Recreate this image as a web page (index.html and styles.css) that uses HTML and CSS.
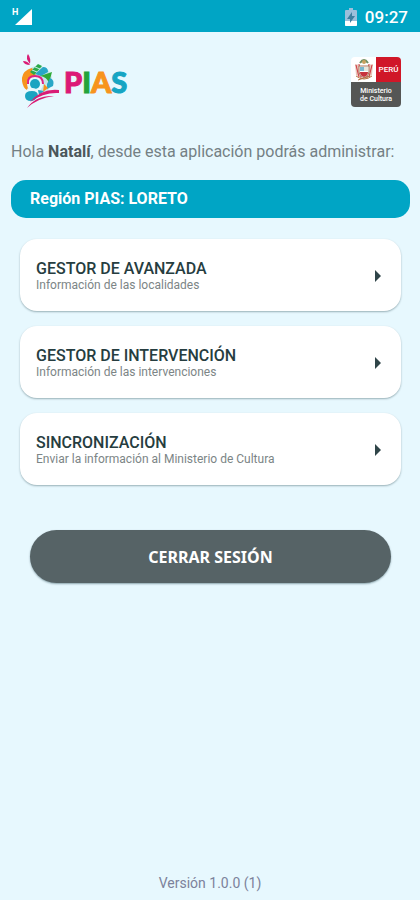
FILE: index.html
```html
<!DOCTYPE html>
<html lang="es">
<head>
    <meta charset="UTF-8">
    <meta name="viewport" content="width=device-width, initial-scale=1.0">
    <title>PIAS</title>
    <link rel="stylesheet" href="styles.css">
</head>
<body>
    <!-- Status bar -->
    <div class="status-bar">
        <div class="signal">
            <span class="signal-type">H</span>
            <svg width="18" height="18" viewBox="0 0 18 18" aria-hidden="true"><path d="M17 1v16H0z" fill="#fff"/></svg>
        </div>
        <div class="status-right">
            <svg width="12" height="18" viewBox="0 0 12 18" aria-hidden="true">
                <path d="M4 0h4v2h3q1 0 1 1v14q0 1-1 1H1q-1 0-1-1V3q0-1 1-1h3z" fill="#9dbfdb"/>
                <path d="M0 13h12v4q0 1-1 1H1q-1 0-1-1z" fill="#fff"/>
                <path d="M7 4L2 11h3v4l5-7H7z" fill="#3f7f9f"/>
            </svg>
            <span class="clock">09:27</span>
        </div>
    </div>

    <header class="header">
        <div class="brand">
            <svg width="38" height="56" viewBox="0 0 38 56" aria-hidden="true">
                <!-- feathers -->
                <path d="M8 10Q3 4 6 0q3 4 2 10z" fill="#d91c75"/>
                <path d="M8 11Q2 11 1 7q5 0 7 4z" fill="#d91c75"/>
                <!-- body -->
                <circle cx="16" cy="26" r="14" fill="#c5e6ea"/>
                <path d="M10 14Q-1 17 0 27q1 7 5 9l3-9 6-7z" fill="#f7941d"/>
                <path d="M8 18l8-8 4 2-8 9z" fill="#2baa4a"/>
                <path d="M10 16l5 2M13 13l5 2" stroke="#c9eee5" stroke-width="1"/>
                <path d="M13 20l8-7q5 0 5 5l-7 4z" fill="#28a7c7"/>
                <path d="M18 22l12-4-3 11q-2-6-9-7z" fill="#2faa36"/>
                <path d="M28 24q5 2 3 8l-6 3v-5z" fill="#28a7c7"/>
                <path d="M22 30l4 4-5 4z" fill="#f7941d"/>
                <circle cx="13" cy="30" r="8" fill="#e8f8fc"/>
                <path d="M6 30q-1-8 7-8t8 8" fill="none" stroke="#df2380" stroke-width="2"/>
                <circle cx="13" cy="30" r="5" fill="#1aa4c1"/>
                <circle cx="10" cy="42" r="8" fill="#e8f8fc"/>
                <path d="M3 42q0-5 7-5 6 0 6 5-3 5-7 5-6 0-6-5z" fill="#1aa4c1"/>
                <path d="M16 36l6 1-5 4z" fill="#28a7c7"/>
                <!-- strokes -->
                <path d="M8 48Q20 34 37 36v3Q22 38 8 48z" fill="#d91c75"/>
                <path d="M5 54Q14 41 32 42 16 44 5 54z" fill="#d91c75"/>
            </svg>
            <div class="brand-name"><span class="pink">P</span><span class="green">I</span><span class="orange">A</span><span class="blue">S</span></div>
        </div>
        <div class="ministry">
            <div class="ministry-top">
                <div class="shield">
                    <svg width="20" height="22" viewBox="0 0 20 22" aria-hidden="true">
                        <path d="M6 4q4-6 8 0" fill="none" stroke="#719064" stroke-width="2"/>
                        <circle cx="10" cy="3" r="2" fill="#c9a05d"/>
                        <path d="M1 5l5 1v12l-4-2zM19 5l-5 1v12l4-2z" fill="#e8c3b8"/>
                        <path d="M2 6l3 12M5 5l2 14M18 6l-3 12M15 5l-2 14" stroke="#cf3740" stroke-width="1"/>
                        <path d="M5 7h10v6q0 4-5 6-5-2-5-6z" fill="#fff" stroke="#a7755a"/>
                        <path d="M6 8h4v4H6z" fill="#79b7cf"/>
                        <path d="M10 8h4v4h-4z" fill="#e6e6dc"/>
                        <path d="M6 13h8q0 4-4 5-4-1-4-5z" fill="#c7333d"/>
                        <path d="M2 17q8 6 16 0M4 21l12-4" fill="none" stroke="#b37342"/>
                    </svg>
                </div>
                <div class="country">PERÚ</div>
            </div>
            <div class="ministry-name">Ministerio<br>de Cultura</div>
        </div>
    </header>

    <main class="content">
        <p class="greeting">Hola <b>Natalí</b>, desde esta aplicación podrás administrar:</p>
        <h1 class="region">Región PIAS: LORETO</h1>

        <div class="menu">
            <button class="card" type="button">
                <span class="card-text">
                    <span class="card-title">GESTOR DE AVANZADA</span>
                    <span class="card-info">Información de las localidades</span>
                </span>
                <svg width="6" height="12" viewBox="0 0 6 12" aria-hidden="true"><path d="M0 0l6 6-6 6z"/></svg>
            </button>
            <button class="card" type="button">
                <span class="card-text">
                    <span class="card-title">GESTOR DE INTERVENCIÓN</span>
                    <span class="card-info">Información de las intervenciones</span>
                </span>
                <svg width="6" height="12" viewBox="0 0 6 12" aria-hidden="true"><path d="M0 0l6 6-6 6z"/></svg>
            </button>
            <button class="card" type="button">
                <span class="card-text">
                    <span class="card-title">SINCRONIZACIÓN</span>
                    <span class="card-info">Enviar la información al Ministerio de Cultura</span>
                </span>
                <svg width="6" height="12" viewBox="0 0 6 12" aria-hidden="true"><path d="M0 0l6 6-6 6z"/></svg>
            </button>
        </div>

        <button class="logout" type="button">CERRAR SESIÓN</button>
    </main>

    <footer class="version">Versión 1.0.0 (1)</footer>
</body>
</html>
```

FILE: styles.css
```css
* {
    box-sizing: border-box;
}

body {
    margin: 0;
    min-height: 100vh;
    display: flex;
    flex-direction: column;
    font-family: Roboto, sans-serif;
    background-color: #e7f8fe;
}

/* Status bar */
.status-bar {
    display: flex;
    justify-content: space-between;
    align-items: center;
    height: 32px;
    padding: 2px 12px 0;
    background-color: #00a5c5;
    color: #fff;
}

.signal,
.status-right {
    display: flex;
    align-items: center;
}

.signal-type {
    align-self: flex-start;
    width: 6px;
    margin-right: -3px;
    font-size: 9px;
    font-weight: bold;
    line-height: 9px;
}

.status-right {
    gap: 8px;
}

.clock {
    font-size: 17px;
    font-weight: 500;
}

/* Header */
.header {
    display: flex;
    justify-content: space-between;
    padding: 22px 19px 0 22px;
}

.brand {
    display: flex;
    align-items: center;
    gap: 4px;
}

.brand-name {
    font-family: Lato, sans-serif;
    font-size: 29px;
    font-weight: 900;
    line-height: 32px;
    -webkit-text-stroke: 1px currentColor;
}

.pink { color: #dc1976; }
.green { color: #24a43b; }
.orange { color: #f7941d; }
.blue { color: #16a5c3; }

.ministry {
    width: 50px;
    height: 50px;
    margin-top: 3px;
    border-radius: 4px;
    overflow: hidden;
    color: #fff;
}

.ministry-top {
    display: flex;
    height: 25px;
}

.shield,
.country {
    flex: 1;
    display: flex;
    align-items: center;
    justify-content: center;
}

.shield {
    background-color: #fff;
}

.country {
    background-color: #d01728;
    font-size: 8px;
    font-weight: 500;
}

.ministry-name {
    height: 25px;
    padding-top: 5px;
    background-color: #555655;
    font-size: 7px;
    font-weight: 500;
    line-height: 8px;
    text-align: center;
}

/* Main content */
.content {
    flex: 1;
    padding: 32px 10px 0 11px;
}

.greeting {
    margin: 0;
    font-size: 16px;
    line-height: 19px;
    color: #748084;
}

.greeting b {
    color: #4b575b;
}

.region {
    margin: 19px 0 0;
    padding: 0 19px;
    border-radius: 15px;
    background-color: #00a5c5;
    color: #fff;
    font-size: 16px;
    font-weight: bold;
    line-height: 38px;
}

.menu {
    display: grid;
    gap: 15px;
    padding: 21px 9px 0;
}

.card {
    display: flex;
    align-items: center;
    justify-content: space-between;
    height: 72px;
    padding: 2px 20px 0 16px;
    border: none;
    border-radius: 17px;
    background-color: #fff;
    box-shadow: 0 1px 2px rgba(0, 40, 50, 0.35);
    font-family: inherit;
    text-align: left;
    cursor: pointer;
}

.card svg {
    fill: #304549;
}

.card-text {
    display: flex;
    flex-direction: column;
}

.card-title {
    font-size: 16px;
    font-weight: 500;
    line-height: 18px;
    color: #263d40;
}

.card-info {
    font-size: 12px;
    line-height: 14px;
    color: #7c8586;
}

.logout {
    display: block;
    width: calc(100% - 38px);
    height: 53px;
    margin: 45px auto 0;
    border: none;
    border-radius: 27px;
    background-color: #566366;
    box-shadow: 0 1px 2px rgba(0, 40, 50, 0.4);
    color: #fff;
    font-family: "Noto Sans", sans-serif;
    font-size: 16px;
    font-weight: bold;
    cursor: pointer;
}

/* Footer */
.version {
    padding-bottom: 8px;
    font-size: 14px;
    line-height: 18px;
    text-align: center;
    color: #7c829b;
}
```
